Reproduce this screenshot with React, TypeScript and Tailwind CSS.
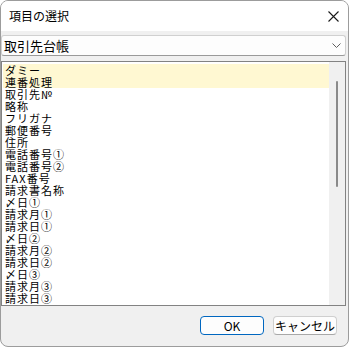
import React from "react";

const items = [
  "ダミー",
  "連番処理",
  "取引先№",
  "略称",
  "フリガナ",
  "郵便番号",
  "住所",
  "電話番号①",
  "電話番号②",
  "FAX番号",
  "請求書名称",
  "〆日①",
  "請求月①",
  "請求日①",
  "〆日②",
  "請求月②",
  "請求日②",
  "〆日③",
  "請求月③",
  "請求日③",
];

const jp = { fontFamily: '"Noto Sans CJK JP", "Noto Sans", sans-serif' };

export default function App() {
  return (
    <div className="w-[351px] h-[348px] bg-white">
      <div className="w-[349px] h-[347px] border border-[#9c9c9c] rounded-[8px] overflow-hidden bg-[#f0f0f0] flex flex-col" style={jp}>
        {/* title bar */}
        <div className="h-[30px] bg-white flex items-center justify-between pl-[8px] pr-[9px] shrink-0">
          <span className="text-[12px] leading-none text-black">項目の選択</span>
          <svg width="11" height="11" viewBox="0 0 11 11">
            <path d="M0.5 0.5 L10.5 10.5 M10.5 0.5 L0.5 10.5" stroke="#1a1a1a" strokeWidth="1.1" fill="none" />
          </svg>
        </div>
        {/* combo */}
        <div className="pr-[2px] pt-[4px] shrink-0">
          <div className="h-[21px] w-[345px] bg-[#fdfdfd] border border-[#d0d0d0] border-b-[#9a9a9a] rounded-[3px] flex items-center justify-between pl-[2px] pr-[4px]">
            <span className="text-[13px] leading-none text-black">取引先台帳</span>
            <svg width="9" height="5" viewBox="0 0 9 5">
              <path d="M0.5 0.5 L4.5 4.5 L8.5 0.5" stroke="#5f5f5f" strokeWidth="1" fill="none" />
            </svg>
          </div>
        </div>
        {/* list */}
        <div className="pt-[5px] pr-[2px] shrink-0">
          <div className="w-[345px] h-[245px] border border-[#828282] bg-white flex">
            <div className="flex-1 pl-[1px] pt-[2px]">
              {items.map((t, i) => (
                <div
                  key={t}
                  className={
                    i < 2
                      ? "h-[12px] leading-[12px] text-[11px] tracking-[1px] text-black pl-[2px] bg-[#fff8d2] whitespace-nowrap"
                      : "h-[12px] leading-[12px] text-[11px] tracking-[1px] text-black pl-[2px] whitespace-nowrap"
                  }
                >
                  {t}
                </div>
              ))}
            </div>
            <div className="w-[16px] h-full bg-[#f0f0f0] relative">
              <div className="absolute left-[7px] top-[19px] w-[2px] h-[106px] rounded-full bg-[#8a8a8a]" />
            </div>
          </div>
        </div>
        {/* buttons */}
        <div className="flex justify-end gap-[9px] pt-[10px] pr-[11px]">
          <button className="w-[64px] h-[19px] bg-[#fdfdfd] border-[1.5px] border-[#0067c0] rounded-[4px] text-[12px] leading-none text-black flex items-center justify-center">
            OK
          </button>
          <button className="w-[64px] h-[19px] bg-[#fdfdfd] border border-[#cfcfcf] border-b-[#a8a8a8] rounded-[4px] text-[12px] leading-none text-black flex items-center justify-center">
            キャンセル
          </button>
        </div>
      </div>
    </div>
  );
}
